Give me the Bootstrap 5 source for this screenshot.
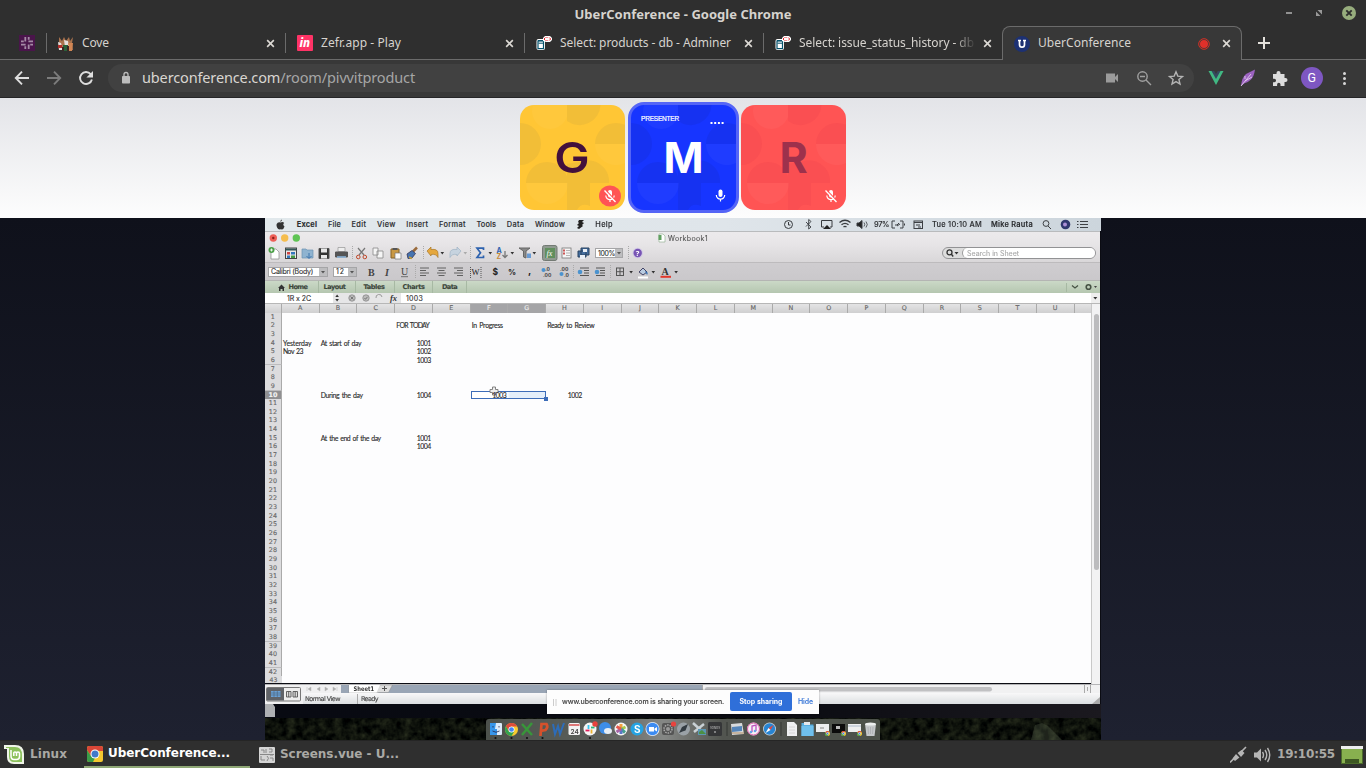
<!DOCTYPE html>
<html lang="en">
<head>
<meta charset="utf-8">
<title>UberConference</title>
<link href="https://cdn.jsdelivr.net/npm/bootstrap@5.3.0/dist/css/bootstrap.min.css" rel="stylesheet">
<style>
html,body{width:1366px;height:768px;overflow:hidden}
body{font-family:"Noto Sans",sans-serif;background:#2f2f2f;color:#d6d3ce;font-size:12px;line-height:1}
svg{display:block;flex:none}
.fit{display:inline-block;white-space:nowrap;flex:none}
/* window frame */
.win-title{height:26px;font-weight:700;font-size:13px;padding-top:8px}
.win-btns{right:0;top:0}
.tabstrip{height:34px;background:linear-gradient(#6b6b6b,#6b6b6b) bottom/100% 1px no-repeat}
.tabx{width:239px;padding:0 10px 0 11px;height:20px;border-left:1px solid #6b6b6b;margin-top:7px;overflow:hidden}
.tab-pin{width:46px;padding-left:19px;height:34px}
.tab-on{width:240px;height:34px;padding:0 10px 0 11px;background:#383838;border:1px solid #6b6b6b;border-bottom:0;border-radius:8px 8px 0 0}
.tab-name{margin-left:8px;font-size:12px;line-height:18px;margin-top:-1px}
.clip{width:175px;overflow:hidden;-webkit-mask:linear-gradient(90deg,#000 155px,transparent 177px)}
.navrow{height:38px;background:#383838;border-bottom:1px solid #252527;padding-bottom:2px}
.omni{width:1086px;height:28px;border-radius:14px;background:#414141}
.url{font-size:14.5px;margin-left:12px;line-height:20px;color:#a6a6a6;margin-top:-1px}
.url b{font-weight:400;color:#d9d6d1}
.lock{margin-left:14px}
/* conference */
.people{height:120px;padding-top:4px;background:linear-gradient(#e3e4e8,#fdfdfd)}
.tile{width:105px;height:105px;border-radius:14px;overflow:hidden;position:relative;margin-top:3px;font-family:Inter,sans-serif;font-weight:700;font-size:43px}
.tile-g{background:#ffc635;color:#43103c}
.tile-r{background:#ff5454;color:#9d314c}
.tile-m{width:111px;height:111px;margin:0 2px 0 3px;border:3px solid #5565f6;border-radius:16px;background:#1735ff;color:#fff}
.tile .glyph{position:absolute;inset:0;display:flex;align-items:center;justify-content:center}
.tile-g .glyph{transform:scaleX(1.1);padding-right:1px;font-weight:600}
.tile svg.over{position:absolute;left:0;top:0}
.tag{position:absolute;left:10px;top:10px;font:6.5px "Liberation Sans",sans-serif;line-height:8px;-webkit-text-stroke:.2px #fff}
.stage{height:522px;padding-left:265px;background:linear-gradient(#0f111b,#1e2130)}
.mac{width:836px;height:522px;position:relative;overflow:hidden;background:#0b0c13}
.soft{filter:blur(.42px);-webkit-text-stroke:.12px currentColor}
.mac-menu{height:13px;background:linear-gradient(90deg,#e2e9ec,#dfe5ea 55%,#ccd5dc);font:500 7.4px Inter,sans-serif;color:#2c2e31;gap:10.7px;padding-left:10px}
.xl{width:835px}
.xl-title{height:13px;background:linear-gradient(#eceaec,#e7e5e7);border-top:1px solid #b9bbbd;font:7px Inter,sans-serif;color:#555}
.xl-tb1{height:18px;background:linear-gradient(#e7e5e7,#d9d7d9)}
.xl-tb2{height:19px;background:linear-gradient(#cfcdd0,#cac8cb);border-top:1px solid #bdbbbd;border-bottom:1px solid #b4b5b3}
.xl-field{background:#fff;border:1px solid #a5a5a7;height:10px;font:7px Inter,sans-serif;color:#333;padding-left:2px;position:relative}
.xl-drop{width:8px;height:8px;background:#bdbdbf url('data:image/svg+xml,<svg xmlns="http://www.w3.org/2000/svg" width="8" height="8"><path d="M2 3h4L4 5.500z" fill="%23555"/></svg>');margin-left:auto}
.xl-ribbon{height:12px;background:linear-gradient(#cbd9c7,#b5c7b0);font:700 6.6px "DejaVu Sans",sans-serif;color:#3c463b}
.xl-ribbon>span{height:12px;border-right:1px solid #a7b9a3;display:flex;align-items:center;justify-content:center}
.xl-form{height:11px;background:#fff;font:7px Inter,sans-serif;color:#333;border-bottom:1px solid #b7b7b7}
.sheet{height:380px}
.cols,.line{display:grid;grid-template-columns:16.8px repeat(22,37.75px);width:826px;overflow:hidden}
.cols{height:8.6px;font:6.4px/9px "DejaVu Sans",sans-serif;color:#666;background:linear-gradient(#e4e4e5,#cfcfd0)}
.cols div{border-right:1px solid #aaa;text-align:center}
.cols .sel{background:#a5a5a7;color:#eee}
.line{height:8.67px;font:6.9px/8.6px Lato,sans-serif;color:#2b2b2b;background:#fdfdfe;word-spacing:1px}
.line:last-child{height:7.3px}
.line:last-child .rh{font-size:6.2px;line-height:7.3px;border:0}
.line div{white-space:nowrap;overflow:visible;padding:0 2px 0 1.2px}
.line .rh{background:#dcdcde;border-bottom:1px solid #bcbcbe;border-right:1px solid #aaa;text-align:center;font:6.4px/8.6px "DejaVu Sans",sans-serif;color:#666;padding:0}
.line .rh.sel{background:#909092;color:#f4f4f4;font-weight:700}
.pick{border:1.5px solid #3c6cb8;background:linear-gradient(90deg,#fff 48%,#e3eefa 52%);height:8.67px}
.cursor{position:absolute;left:224px;top:168px}
.handle{position:absolute;left:279px;top:179px;width:4px;height:4px;background:#3c6cb8}
.search{width:154px;height:12px;border:1px solid #929294;border-radius:6px;background:#ddd;margin-right:4px;font:7px Inter,sans-serif;color:#aaa}
.search div{background:#fff;border-radius:6px;height:10px;width:133px;padding-left:4px;border-left:1px solid #999}
.vbar{width:9px;background:#f2f2f3;border-left:1px solid #c8c8c8}
.vthumb{width:5px;height:256px;border-radius:3px;background:#bcbcbe;margin:10px auto 0}
.foot{height:20px;background:#eaebed;border-top:1px solid #b5b5b7}
.foot-tabs{height:8px;background:#99a5b5}
.foot-stat{height:11px;padding-top:1px;background:linear-gradient(#f8f8f9,#dcdfe1);font:6.5px "DejaVu Sans",sans-serif;color:#444}
.strip{height:14px;background:linear-gradient(90deg,#080a12,#0a0b11 60%,#1b191f)}
.share{position:absolute;left:282px;top:472px;width:272px;height:24px;padding-bottom:1px;background:#fdfdfd;font:500 7px Inter,sans-serif;color:#444;box-shadow:0 0 2px #0005}
.stopb{width:62px;height:19px;border-radius:2px;background:#2f6fd9;color:#fff;margin:0 6px}
.hide-link{color:#3a78d8}
.dock{position:absolute;left:221px;top:501px}
.taskbar{height:28px;background:#2f2f2f;border-top:1px solid #252525;font:700 12px "DejaVu Sans",sans-serif;color:#aaa9a5}
.taskbar .fit{margin-top:-1px}
.task{height:27px;width:166px;border-bottom:2px solid #8fa876;color:#fff;padding-left:3px;margin-left:17px}
.g3{margin-left:3px}.g5{margin-left:5px}.g9{margin-left:9px}
</style>
</head>
<body>
<svg width="0" height="0" class="position-absolute"><defs>
<symbol id="x" viewBox="0 0 10 10"><path d="M1.3 1.3l7.4 7.4M8.7 1.3L1.3 8.7" stroke="#dcd9d4" stroke-width="1.8"/></symbol>
<symbol id="adm" viewBox="0 0 16 16"><rect x=".5" y="4" width="8.5" height="11" rx="2" fill="#fff"/><rect x="2" y="6" width="5.500" height="7.600" fill="#fff" stroke="#06526c" stroke-width="1.200"/><path d="M2 5.500h5.500M2.500 8.200h4.500" stroke="#06526c"/><path d="M9 1h5l2 2v2l-2 2h-4l-3-1V3z" fill="#fff"/><path d="M9.500 2.500L8 4l1.500 1.500M13.200 2.500L14.700 4l-1.500 1.500M11 2v1M11 5v1" stroke="#e3262d" fill="none"/></symbol>
<symbol id="pat" viewBox="0 0 105 105"><g fill="currentColor"><path d="M47 0h33.500a21 21 0 0 1-33.500 16zM0 18a21 21 0 0 1 0 42zM75 39a21 21 0 0 1 42 0zM6 78a21 21 0 0 1 42 0zM47 78V59q8-2 13-2a21 21 0 0 1 29 21zM47 78v27h10q4-8 13-4V78z" opacity=".75"/></g><g fill="#fff"><path d="M13 0a17 17 0 0 0 34 12V0zM6 78a21 21 0 0 0 42 0zM75 39a21 21 0 0 0 30 19V39z" opacity=".035"/></g></symbol>
<symbol id="mic" viewBox="0 0 14 14"><rect x="5" y="1" width="4" height="7.500" rx="2" fill="#fff"/><path d="M2.800 6.500a4.200 4.200 0 0 0 8.400 0M7 10.500V13" stroke="#fff" stroke-width="1.200" fill="none"/></symbol>
<symbol id="mute" viewBox="0 0 14 14"><use href="#mic"/><path d="M2.500 1L13 12" stroke="#ff5454" stroke-width="1.200"/><path d="M1.500 1.500L12.500 13" stroke="#fff" stroke-width="1.300"/></symbol>
<symbol id="chr" viewBox="0 0 16 16"><circle cx="8" cy="8" r="8" fill="#f7ca2e"/><path d="M1.100 4A8 8 0 0 1 15 4.200H8L4.500 10z" fill="#dd4b3c"/><path d="M1.100 4A8 8 0 0 0 8 16l3.500-6L8 11.500 4.500 10z" fill="#32a350"/><circle cx="8" cy="8" r="3.700" fill="#fff"/><circle cx="8" cy="8" r="2.900" fill="#4285f4"/></symbol>
</defs></svg>

<header>
 <div class="win-title text-center position-relative"><span class="fit" data-w="217">UberConference - Google Chrome</span>
  <svg class="win-btns position-absolute" width="100" height="26" viewBox="1266 0 100 26"><path d="M1286 13h6" stroke="#aaa" stroke-width="1.600"/><path d="M1317.500 10h4.500v4.500zM1316 11.500v4.500h4.500z" fill="#999"/><circle cx="1349" cy="13" r="7" fill="#97ad7d"/><path d="M1346.300 10.300l5.400 5.400m0-5.400l-5.400 5.400" stroke="#2d2d2d" stroke-width="1.900"/></svg>
 </div>
 <nav class="tabstrip d-flex">
  <div class="tab-pin d-flex align-items-center"><svg width="16" height="16" viewBox="0 0 16 16"><rect width="16" height="16" fill="#4a154b"/><path d="M6.300 2v4.600M9.700 9.400V14M2 9.700h4.600M9.400 6.300H14M9.700 2v2.800M6.300 11.200V14M2 6.300h2.800M11.200 9.700H14" stroke="#a58ba6" stroke-width="1.800"/></svg></div>
  <div class="tabx d-flex align-items-center"><svg width="16" height="16" viewBox="0 0 16 16"><path d="M1 2l3 4 2-4 2 4 3-4 1 4 3-4-1 6 1 7H1V9z" fill="#a8724d"/><path d="M0 7l3 1 2 7H1zM6 5l4 1 1 5-4 1z" fill="#e3dfdc"/><path d="M5 10h5v6H5z" fill="#28613b"/><path d="M10 8h5l-1 8h-3z" fill="#d18654"/><path d="M0 10h4v3H0z" fill="#b12e2b"/><path d="M4 12h2v4H4zM9 11h2v5H9z" fill="#3a2724"/></svg><span class="fit tab-name" data-w="27">Cove</span><svg class="ms-auto" width="9" height="9"><use href="#x"/></svg></div>
  <div class="tabx d-flex align-items-center"><svg width="16" height="16"><rect width="16" height="16" rx="1" fill="#ff3366"/><text x="2.500" y="12" font-family="Noto Sans" font-style="italic" font-weight="800" font-size="11.500" fill="#fff">in</text></svg><span class="fit tab-name" data-w="80">Zefr.app - Play</span><svg class="ms-auto" width="9" height="9"><use href="#x"/></svg></div>
  <div class="tabx d-flex align-items-center"><svg width="16" height="16"><use href="#adm"/></svg><span class="fit tab-name" data-w="171">Select: products - db - Adminer</span><svg class="ms-auto" width="9" height="9"><use href="#x"/></svg></div>
  <div class="tabx d-flex align-items-center"><svg width="16" height="16"><use href="#adm"/></svg><div class="tab-name clip"><span class="fit" data-w="175">Select: issue_status_history - db</span></div><svg class="ms-auto" width="9" height="9"><use href="#x"/></svg></div>
  <div class="tab-on d-flex align-items-center"><svg width="16" height="16"><circle cx="8" cy="8" r="8" fill="#1d3173"/><path d="M4 4.500h3M9 4.500h3M5.500 4.500v4q0 2.700 2.500 2.700t2.500-2.700v-4" fill="none" stroke="#fff" stroke-width="1.700"/></svg><span class="fit tab-name" data-w="93">UberConference</span><svg class="ms-auto me-2" width="12" height="12" viewBox="0 0 12 12"><circle cx="6" cy="6" r="5.300" fill="none" stroke="#d93025" stroke-width="1"/><circle cx="6" cy="6" r="4" fill="#e0302a"/></svg><svg class="ms-1" width="9" height="9"><use href="#x"/></svg></div>
  <svg class="ms-3 mt-2" width="14" height="18" viewBox="1257 34 14 18"><path d="M1257 43h12M1263 37v12" stroke="#e4e1dc" stroke-width="2"/></svg>
 </nav>
 <div class="navrow d-flex align-items-center">
  <svg width="108" height="30" viewBox="0 63 108 30" fill="none" stroke-width="1.900"><path d="M29 78H16.500M22 71.700L15.800 78l6.200 6.300" stroke="#dedede"/><path d="M47 78h12.500M54 71.700l6.200 6.300-6.200 6.300" stroke="#7c7c7c"/><path d="M90.700 74.200a6 6 0 1 0 1.200 5.300" stroke="#dedede"/><path d="M93 71v6.600h-6.600z" fill="#dedede"/></svg>
  <div class="omni d-flex align-items-center">
   <svg class="lock" width="8" height="14" viewBox="122 71 8 12"><path d="M124 75v-1.500a2 2 0 0 1 4 0V75" fill="none" stroke="#bdbdbd" stroke-width="1.300"/><rect x="122" y="75" width="8" height="7.500" rx=".8" fill="#bdbdbd"/></svg>
   <span class="fit url" data-w="273"><b>uberconference.com</b>/room/pivvitproduct</span>
   <svg class="ms-auto" width="94" height="20" viewBox="1100 68 94 20"><rect x="1106" y="73.500" width="9" height="9" fill="#9b9b9b"/><path d="M1115 77l3-3v8l-3-3z" fill="#9b9b9b"/><g fill="none" stroke="#a0a0a0" stroke-width="1.400"><circle cx="1142.500" cy="76.500" r="4.700"/><path d="M1146 80l5 5M1140 76.500h5"/><path d="M1176 71.800l1.800 4.300 4.700.4-3.600 3 1.100 4.600-4-2.500-4 2.500 1.100-4.600-3.600-3 4.700-.4z" stroke="#b5b5b5"/></g></svg>
  </div>
  <svg width="172" height="30" viewBox="1194 63 172 30"><path d="M1208.500 71h5l2.500 4.500 2.500-4.500h5L1216 85z" fill="#41b883"/><path d="M1211.500 71h2.700l1.800 3 1.800-3h2.700l-4.500 8z" fill="#35495e"/><path d="M1241 86q1-9 5-12 4-2 9-4.500-1 7-4 10-3 3-7 4z" fill="#9b62c0"/><path d="M1241 86l10-12M1245 81l7-4M1245 79v-3" stroke="#e3cdee" stroke-width=".9"/><path d="M1273 74h3.500v-1a2 2 0 0 1 4 0v1h4v4h1a2 2 0 0 1 0 4h-1v4h-4v-1.500a1.700 1.700 0 0 0-3.400 0V86H1273v-3.800h1.300a1.700 1.700 0 0 0 0-3.500H1273z" fill="#dcdcdc"/><circle cx="1312" cy="78" r="11" fill="#7e57c2"/><text x="1307.600" y="82.400" font-family="Roboto" font-size="12.500" fill="#fff">G</text><g fill="#d8d8d8"><circle cx="1344.500" cy="73.500" r="1.500"/><circle cx="1344.500" cy="78.500" r="1.500"/><circle cx="1344.500" cy="83.500" r="1.500"/></g></svg>
 </div>
</header>

<section class="people d-flex justify-content-center">
 <div class="tile tile-g"><svg class="over" width="105" height="105" color="#eebb38"><use href="#pat"/></svg><div class="glyph">G</div><svg class="over" width="105" height="105"><ellipse cx="90" cy="91" rx="11" ry="10.500" fill="#ff5454"/><use href="#mute" x="83" y="84" width="14" height="14"/></svg></div>
 <div class="tile tile-m"><svg class="over" width="105" height="105" color="#1731ec"><use href="#pat"/></svg><div class="glyph">M</div><span class="tag fit" data-w="38">PRESENTER</span><svg class="over" width="105" height="105"><path d="M79.500 18h14" stroke="#fff" stroke-width="2" stroke-dasharray="2 1.700"/><use href="#mic" x="82.500" y="83.500" width="14" height="14"/></svg></div>
 <div class="tile tile-r"><svg class="over" width="105" height="105" color="#f84d52"><use href="#pat"/></svg><div class="glyph">R</div><svg class="over" width="105" height="105"><use href="#mute" x="83" y="84" width="14" height="14"/></svg></div>
</section>

<main class="stage">
<div class="mac"><div class="soft">
 <div class="mac-menu d-flex align-items-center">
  <svg width="11" height="11" viewBox="0 0 11 11"><path d="M7 .5Q7 2.500 5.300 2.900 5.300 1 7 .5zM5.500 3.500q2.500-1 3.700.5-2 1.500.3 3.500-1 3-2.500 3-1.200-.6-2.300 0C2.500 10.500 1 7 1.700 5q1-2.300 3.800-1.500z" fill="#333"/></svg>
  <b class="fit" data-w="20.500">Excel</b><span class="fit" data-w="13">File</span><span class="fit" data-w="14.700">Edit</span><span class="fit" data-w="18.700">View</span><span class="fit" data-w="22">Insert</span><span class="fit" data-w="26.700">Format</span><span class="fit" data-w="19.700">Tools</span><span class="fit" data-w="17.500">Data</span><span class="fit" data-w="30">Window</span>
  <svg width="9" height="9" viewBox="0 0 9 9"><path d="M3 0h5L6 2l2 1-2 2 1 1-4 3-2-1 2-2-2-1 2-2-1-1z" fill="#222"/></svg><span class="fit" data-w="17.500">Help</span>
  <div class="d-flex align-items-center ms-auto">
   <svg width="92" height="13" viewBox="782 218 92 13" fill="none" stroke="#383b3f"><circle cx="788.500" cy="224.500" r="4"/><path d="M788.500 222v3h2"/><path d="M806 222l5 5-2.300 2v-9.500l2.300 2-5 5" stroke-width=".9"/><path d="M824 227h-2.500v-6.500h10.500v6.500H830"/><path d="M823 229l4-4 4 4z" fill="#222" stroke="none"/><path d="M839.500 222.500q5.500-4.500 11 0M841.500 224.800q3.500-3 7 0M843.500 227q1.500-1.300 3 0" stroke-width="1.300"/><path d="M857 223h2l3-2.500v8l-3-2.500h-2z" fill="#222"/><path d="M864 222.500q1.500 2 0 4M866 221.500q2.500 3 0 6" stroke-width=".8"/></svg>
   <span class="fit" data-w="15">97%</span>
   <svg width="43" height="13" viewBox="889 218 43 13" fill="none" stroke="#3d4044"><path d="M895 221h-3v7h3M900 221h3v7h-3M904.500 223.500v2M895 225h2l2-2M897 226l3-2"/><rect x="914" y="221" width="8.500" height="7.500"/><path d="M914 222.500h8.500M916 225h4M918 227h3"/></svg>
   <span class="fit" data-w="50">Tue 10:10 AM</span><span class="fit fw-semibold g9" data-w="42">Mike Rauta</span>
   <svg width="68" height="13" viewBox="1033 218 68 13" fill="none" stroke="#3d4044"><circle cx="1046" cy="223.500" r="2.900"/><path d="M1048 226l3 3"/><circle cx="1065.500" cy="224.500" r="4.800" fill="#30386e" stroke="none"/><circle cx="1065" cy="224.500" r="2" fill="#ac8fd6" stroke="none"/><path d="M1080 221.500h8M1080 224.500h8M1080 227.500h8M1077 221.500h1.500M1077 224.500h1.500M1077 227.500h1.500" stroke-width="1.200"/></svg>
  </div>
 </div>
 <div class="xl">
  <div class="xl-title d-flex align-items-center"><svg width="403" height="12" viewBox="265 232 403 12"><circle cx="273.300" cy="238" r="3.700" fill="#ed5f57"/><circle cx="273.300" cy="238" r="1.200" fill="#8c1d17"/><circle cx="284.700" cy="238" r="3.700" fill="#f5bd4e"/><circle cx="296.300" cy="238" r="3.700" fill="#5fc454"/><path d="M659 234h4l2 2v6h-6z" fill="#fff" stroke="#8a8" stroke-width=".6"/><path d="M658.500 235h3v5h-3z" fill="#60a060"/></svg><span class="fit" data-w="40">Workbook1</span></div>
  <div class="xl-tb1 d-flex align-items-center">
   <svg width="330" height="18" viewBox="265 244 330 18" fill="none" stroke="#555">
    <path d="M271 249h5l3 3v7h-8z" fill="#fff" stroke="#888" stroke-width=".7"/><circle cx="271.500" cy="250" r="3" fill="#4ba047" stroke="none"/><path d="M270 250h3M271.500 248.500v3" stroke="#fff" stroke-width=".8"/>
    <rect x="285.500" y="248" width="11" height="10.500" fill="#e8e8e8" stroke="#444"/><path d="M285.500 249.500h11" stroke="#355" stroke-width="2"/><path d="M287 252h3v2.500h-3z" fill="#c44" stroke="none"/><path d="M291 252h4v2.500h-4zM287 255.500h3v2.500h-3z" fill="#37b" stroke="none"/><path d="M291 255.500h4v2.500h-4z" fill="#494" stroke="none"/>
    <path d="M302 249h4l1 1h6v8h-11z" fill="#8fb3d0" stroke="#6b93b3" stroke-width=".7"/><path d="M309 253v5m-2.500-2l2.500 2.500 2.500-2.500" stroke="#3d74ad"/>
    <path d="M319 248.500h10v10h-10z" fill="#333"/><path d="M321 248.500h6v4h-6zM321 255h6v3.500h-6z" fill="#e8e8e8" stroke="none"/>
    <path d="M338 247.500h7v4h-7z" fill="#eee" stroke="#888" stroke-width=".6"/><path d="M335.500 252h12v5h-12z" fill="#555"/><path d="M337 257h9" stroke="#8cb8e0" stroke-width="1.500"/>
    <path d="M352.500 246v14M423.500 246v14M470.500 246v14" stroke="#aaa" stroke-dasharray="1 1"/>
    <path d="M358 248l6 7M365 248l-6 7" stroke="#777" stroke-width="1.200"/><circle cx="358.300" cy="257" r="1.800" stroke="#c0492b"/><circle cx="364.800" cy="257" r="1.800" stroke="#c0492b"/>
    <path d="M373 248h5v7h-5zM377 251h6v7h-6z" fill="#f5f5f5" stroke="#888" stroke-width=".8"/>
    <path d="M391 249h8v9h-8z" fill="#c99945" stroke="#85632a"/><path d="M392.500 248h5v2h-5z" fill="#555" stroke="none"/><path d="M395 253h6v6h-6z" fill="#fafafa" stroke="#777" stroke-width=".7"/>
    <path d="M417 247.500l-4 4" stroke="#9a6a3b" stroke-width="2.500"/><path d="M407 254l5-3.500 3.500 3-3.500 4.500-4 .5z" fill="#4573b0" stroke="#335" stroke-width=".8"/><path d="M409 257l3 1.500" stroke="#c9a23c" stroke-width="1.500"/>
    <path d="M427 251l4-4v2.500q7-1 7 4v4q-2-4-7-3v1.500z" fill="#e5a73d" stroke="#a9782a" stroke-width=".7"/>
    <path d="M461 251l-4-4v2.500q-7-1-7 4v4q2-4 7-3v1.500z" fill="#c6d3df" stroke="#9fb3c4" stroke-width=".7"/>
    <g fill="#333" stroke="none"><path d="M440.500 252h3.600l-1.800 2.500zM488.500 252h3.600l-1.800 2.500zM510.500 252h3.600l-1.800 2.500zM532.500 252h3.600l-1.800 2.500z"/><path d="M463.500 252h3.600l-1.800 2.500z" fill="#aaa"/></g>
    <path d="M483.500 250v-1.800h-6.500l3.500 4.500-3.500 4.800h6.500V255.500" stroke="#2d62ae" stroke-width="1.700"/>
    <g stroke="none" font-family="Inter" font-size="7" font-weight="700"><text x="496.500" y="252.500" fill="#2d62ae">A</text><text x="496.500" y="259" fill="#c78b3b">Z</text></g><path d="M505 251v6m-2.500-2l2.500 2.500 2.500-2.500" stroke="#777" stroke-width="1.300"/>
    <path d="M519 248h11l-4 3v7l-2.500-1v-6z" fill="#888" stroke="#666"/><path d="M527 253.500h4v4.500h-4z" fill="#6a9cd5" stroke="none"/>
    <rect x="542.500" y="245.500" width="14.500" height="15" rx="2" fill="#8f9a90" stroke="#737a74"/><rect x="545" y="248" width="10" height="10" fill="#618f5e" stroke="none"/><text x="546.500" y="256" stroke="none" fill="#fff" font-family="Liberation Serif" font-style="italic" font-size="8">fx</text>
    <rect x="562" y="248" width="9" height="10" fill="#f6f6f6" stroke="#777" stroke-width=".8"/><path d="M566 250.500h4M566 253h4M566 255.500h4" stroke="#999" stroke-width=".7"/><path d="M563 249.500h2v2h-2zM563 252.500h2v2h-2z" fill="#c55" stroke="none"/>
    <path d="M578 251h8v6h-8zM581 248h8v7h-8z" fill="#446d9e" stroke="#294261"/><path d="M583 249h4v3h-4zM580 255h5v4h-5z" fill="#e9eef5" stroke="none"/>
   </svg>
   <div class="xl-field d-flex align-items-center" style="width:28px"><span class="fit" data-w="17">100%</span><div class="xl-drop"></div></div>
   <svg width="24" height="18" viewBox="623 244 24 18"><path d="M628.500 246v14" stroke="#aaa" stroke-dasharray="1 1"/><circle cx="637.700" cy="253" r="5.200" fill="#d0c8e4"/><circle cx="637.700" cy="253" r="4.200" fill="#7754b4"/><text x="635.700" y="255.900" font-size="7.500" font-weight="700" fill="#fff">?</text></svg>
   <div class="search d-flex justify-content-between ms-auto"><svg width="18" height="10" viewBox="0 0 18 10"><circle cx="6.500" cy="4.300" r="2.500" fill="none" stroke="#333" stroke-width="1.300"/><path d="M8.200 6l2 2.500" stroke="#333" stroke-width="1.400"/><path d="M11.500 4h4l-2 2.500z" fill="#333"/></svg><div><span class="fit" style="line-height:11px" data-w="52">Search in Sheet</span></div></div>
  </div>
  <div class="xl-tb2 d-flex align-items-center">
   <div class="xl-field d-flex align-items-center g3" style="width:60px"><span class="fit" data-w="42">Calibri (Body)</span><div class="xl-drop"></div></div>
   <div class="xl-field d-flex align-items-center g5" style="width:24px"><span class="fit" data-w="9">12</span><div class="xl-drop"></div></div>
   <svg width="330" height="18" viewBox="357 263 330 18" fill="none" stroke="#555">
    <g stroke="none" fill="#444" font-family="Liberation Serif" font-size="10"><text x="368" y="275.500" font-weight="700">B</text><text x="385" y="275.500" font-style="italic" font-weight="700">I</text><text x="401" y="275">U</text></g><path d="M401 276.700h7" stroke-width=".8"/>
    <path d="M415.500 265v14M573.500 265v14M610.500 265v14" stroke="#aaa" stroke-dasharray="1 1"/>
    <path d="M420 268h9M420 270.500h6M420 273h9M420 275.500h6M437 268h9M438.500 270.500h6M437 273h9M438.500 275.500h6M454 268h9M457 270.500h6M454 273h9M457 275.500h6" stroke-width=".9"/>
    <path d="M470.500 267v11M481 267v11" stroke-dasharray="1 1"/>
    <g stroke="none" fill="#222" font-family="Inter" font-weight="700"><text x="471.500" y="275" font-size="8.500" font-family="Liberation Serif" font-weight="400">W</text><text x="492.500" y="275" font-size="8.500">$</text><text x="508" y="275" font-size="8">%</text><text x="528" y="273.500" font-size="10">,</text><g font-size="5" fill="#444"><text x="545" y="271">.0</text><text x="543" y="276.500">.00</text><text x="560" y="271">.00</text><text x="564" y="276.500">.0</text></g></g>
    <g fill="#4b93cf" stroke="none"><circle cx="543.500" cy="270" r="2"/><circle cx="561.500" cy="274" r="2"/><circle cx="580" cy="272" r="2.300"/><circle cx="597" cy="272" r="2.300"/></g>
    <path d="M580 268h9M584 270.500h5M584 273h5M580 275.500h9M596 268h9M600 270.500h5M600 273h5M596 275.500h9"/>
    <rect x="616.500" y="268" width="7" height="7.500"/><path d="M620 268v7.500M616.500 271.700h7"/>
    <path d="M639 272l4-4 4 4-4 3z" fill="#b9cbe0" stroke="#446"/><path d="M645 271q4 1 2 4z" fill="#2c6cb5" stroke="none"/><path d="M638 277.500h10" stroke="#fff" stroke-width="2"/>
    <text x="661.500" y="275" font-family="Liberation Serif" font-size="10" font-weight="700" fill="#333" stroke="none">A</text><path d="M660.500 276.800h10.500" stroke="#e2382b" stroke-width="2"/>
    <path d="M629.300 271h3.600l-1.800 2.500zM651.500 271h3.600l-1.800 2.500zM674.300 271h3.600l-1.800 2.500z" fill="#333" stroke="none"/>
   </svg>
  </div>
  <div class="xl-ribbon d-flex">
   <span style="width:54px;padding-left:2px"><svg class="me-1" width="7" height="7" viewBox="0 0 7 7"><path d="M0 4l3.500-3.500L7 4H6v3H4.500V5h-2v2H1V4z" fill="#333"/></svg><i class="fit fst-normal" data-w="19">Home</i></span>
   <span style="width:37px;padding-right:5px"><i class="fit fst-normal" data-w="22">Layout</i></span><span style="width:39px;padding-right:2px"><i class="fit fst-normal" data-w="21">Tables</i></span><span style="width:38px"><i class="fit fst-normal" data-w="22">Charts</i></span><span style="width:34px"><i class="fit fst-normal" data-w="15">Data</i></span>
   <svg class="ms-auto" width="36" height="12" viewBox="1064 281 36 12" fill="none" stroke="#465244"><path d="M1066.500 283v9" stroke="#a7b9a3"/><path d="M1072 285.500l3 2.500 3-2.500" stroke-width="1.200"/><circle cx="1088.500" cy="287" r="2.300" stroke-width="1.600"/><path d="M1094 286h3l-1.500 2z" fill="#444" stroke="none"/></svg>
  </div>
  <div class="xl-form d-flex align-items-center">
   <div class="text-center" style="width:68px"><span class="fit" data-w="24">1R x 2C</span></div>
   <svg width="73" height="10" viewBox="333 293 73 10"><path d="M333 293h68v10h-68z" fill="#e6e6e7"/><path d="M335.300 297h3.600l-1.800-2.500zM335.300 299h3.600l-1.800 2.500z" fill="#333"/><g fill="#bbb" stroke="#888" stroke-width=".8"><circle cx="352" cy="298" r="3.200"/><circle cx="366" cy="298" r="3.200"/><path d="M376 298a3 3 0 0 1 6-1" fill="none"/></g><path d="M350.500 296.500l3 3m0-3l-3 3M364.500 298l1 1.300 2-2.500" stroke="#666" stroke-width=".8" fill="none"/><text x="390" y="300.500" font-family="Liberation Serif" font-style="italic" font-weight="700" font-size="8.500" fill="#333">fx</text></svg>
   <span class="fit" data-w="17">1003</span>
   <svg class="ms-auto" width="9" height="10"><rect width="9" height="10" fill="#eee"/><path d="M2.300 4h4l-2 2.500z" fill="#333"/></svg>
  </div>
  <div class="sheet d-flex"><div class="overflow-hidden" id="grid" style="width:826px"></div><div class="vbar"><div class="vthumb"></div></div></div>
  <div class="foot d-flex">
   <svg width="38" height="19" viewBox="265 685 38 19"><rect x="265" y="685" width="38" height="19" fill="#f0f0f1"/><rect x="266.500" y="687.500" width="34" height="13.500" rx="1" fill="#eee" stroke="#777"/><rect x="267" y="688" width="17" height="12.500" fill="#606368"/><path d="M271 691h9.500v6H271z" fill="#6ba2d7"/><path d="M271 693h9.500M271 695h9.500M274 691v6M277.300 691v6" stroke="#456" stroke-width=".5"/><path d="M286.500 691.500h4.500v5.500h-4.500zM293 691.500h4.500v5.500H293zM288.700 691.500v5.500M295.200 691.500v5.500" fill="#ddd" stroke="#555" stroke-width=".9"/></svg>
   <div class="flex-grow-1">
    <div class="foot-tabs d-flex"><svg width="90" height="8" viewBox="303 685 90 8"><path d="M303 685h38v8h-38z" fill="#f0f0f1"/><path d="M307 687v4M311 687l-3 2 3 2zM320 687l-3 2 3 2zM325 687l3 2-3 2zM333 687l3 2-3 2zM337 687v4" fill="#aaa" stroke="#bbb" stroke-width=".5"/><path d="M349 685h43.500l-4 7.500H379l-2 .5h-28z" fill="#ddd" stroke="#888" stroke-width=".5"/><path d="M349 685h31l-3.500 7.500H349z" fill="#fff"/><text x="353.500" y="691.200" font-family="DejaVu Sans" font-weight="700" font-size="6.400" fill="#333" textLength="20.500" lengthAdjust="spacingAndGlyphs">Sheet1</text><path d="M382 688.500h5M384.500 686v5" stroke="#555"/></svg>
     <svg class="ms-auto" width="398" height="8" viewBox="702 685 398 8"><path d="M702 685h398v8H702z" fill="#f1f1f2"/><rect x="705" y="687" width="287" height="4.500" rx="2.200" fill="#c1c1c3"/><path d="M702.500 685v8M1084.500 685v8M1087.500 687v4M1090.500 685v8" stroke="#aaa"/></svg></div>
    <div class="foot-stat d-flex align-items-center"><span class="fit" style="margin-left:2px" data-w="35">Normal View</span><svg width="21" height="10"><path d="M17.500 0v10" stroke="#aaa"/></svg><span class="fit" data-w="17">Ready</span><svg class="ms-auto" width="8" height="10"><path d="M0 10l8-7v7z" fill="#aaa"/></svg></div>
   </div>
  </div>
 </div>
 <div class="strip"><svg width="10" height="13"><path d="M0 0h8l2 3v10H0z" fill="#aeb0b3"/></svg></div>
 <svg width="836" height="22"><filter id="leaf" x="0" y="0" width="100%" height="100%" color-interpolation-filters="sRGB"><feTurbulence type="fractalNoise" baseFrequency=".13" numOctaves="3" seed="4"/><feColorMatrix values=".26 0 0 0 -.075  .28 0 0 0 -.07  .18 0 0 0 -.045  0 0 0 0 1"/></filter><rect width="836" height="22" fill="#10150f"/><rect width="836" height="22" filter="url(#leaf)"/><path d="M797 22l-14-14-6-3-7 2-4 15z" fill="#59654c" opacity=".35"/></svg>
 <i class="handle"></i>
 <svg class="cursor" width="10" height="10" viewBox="0 0 10 10"><path d="M3.500 1h3v2.500H9v3H6.500V9h-3V6.500H1v-3h2.500z" fill="#eee" stroke="#777" stroke-width=".9"/></svg>
 <svg class="dock" width="395" height="22" viewBox="486 719 395 22">
  <defs><linearGradient id="dk"><stop offset="0" stop-color="#4c514b"/><stop offset=".3" stop-color="#5c605c"/><stop offset=".45" stop-color="#858785"/><stop offset=".6" stop-color="#525550"/><stop offset="1" stop-color="#4c5149"/></linearGradient></defs>
  <path d="M486 741v-19q0-3 3-3h388q3 0 3 3v19z" fill="url(#dk)"/>
  <rect x="490" y="723" width="12" height="12" rx="1" fill="#dbeaf8"/><path d="M490 723h6l-1 6h2v6h-7z" fill="#3696ea"/><path d="M492.500 731q3.500 2.500 7 0M493 726v1.500M499 726v1.500" stroke="#224" fill="none" stroke-width=".8"/>
  <use href="#chr" x="505" y="723" width="13" height="13"/>
  <path d="M522 724l10 11M532 723l-10 12" stroke="#38963a" stroke-width="2.500"/>
  <path d="M540.500 736l1-12h5q2 3-1 6l-5 1" stroke="#d5512c" stroke-width="2.700" fill="none"/>
  <path d="M553 724l2 10 3-8 2 8 4-11" stroke="#2d6cb8" stroke-width="2" fill="none"/>
  <rect x="568.500" y="723" width="11.500" height="12" rx="1.500" fill="#f3f3f3"/><path d="M569 724h10.500v2H569z" fill="#d77"/><text x="570.500" y="733.500" font-family="Inter" font-size="6.500" font-weight="600" fill="#444">24</text>
  <circle cx="590" cy="729" r="6.500" fill="#f5f5f5"/><path d="M588.500 725v4" stroke="#36c5f0" stroke-width="1.800"/><path d="M591 727.500h3.500" stroke="#2eb67d" stroke-width="1.800"/><path d="M591.500 729.500v4" stroke="#ecb22e" stroke-width="1.800"/><path d="M585.500 730.500h4" stroke="#e01e5a" stroke-width="1.800"/><circle cx="595" cy="724" r="2.700" fill="#e9433e"/>
  <circle cx="605" cy="728" r="6" fill="#3d8ee9"/><ellipse cx="608" cy="731" rx="4" ry="3" fill="#e6eef5"/>
  <circle cx="621" cy="729" r="6.500" fill="#f5f5f5"/><g stroke-width="3"><path d="M621 729v-5" stroke="#f1a13c"/><path d="M621 729l4.500-2" stroke="#a9c94c"/><path d="M621 729l4 3.500" stroke="#45a18f"/><path d="M621 729v5" stroke="#5b78c7"/><path d="M621 729l-4.500 3" stroke="#a665a8"/><path d="M621 729l-4.500-2.500" stroke="#e3594d"/></g>
  <circle cx="637" cy="729" r="6.500" fill="#25a3e2"/><text x="634" y="733" font-family="Inter" font-weight="700" font-size="10" fill="#fff">S</text>
  <circle cx="652.500" cy="729" r="7" fill="#e8f0fa"/><circle cx="652.500" cy="729" r="6.200" fill="#3c8bf2"/><path d="M649 727h5v4.500h-5zM654.500 728.500l2.500-1.500v4.500l-2.500-1.500z" fill="#fff"/>
  <rect x="662" y="723" width="12" height="12" rx="2" fill="#555"/><circle cx="668" cy="729" r="4" fill="none" stroke="#aaa" stroke-width="1.500" stroke-dasharray="1.500 1"/><circle cx="668" cy="729" r="2" fill="#999"/><circle cx="673.500" cy="724" r="2.600" fill="#e9433e"/>
  <circle cx="683.500" cy="729" r="6.500" fill="#9aa1a7"/><path d="M679 733l3-6 6-3-2.500 6.500-3 1z" fill="#333b42"/>
  <path d="M693 723l12 11M704 724l-10 8" stroke="#c9d1d5" stroke-width="2.500"/><path d="M698 729h8v6h-8z" fill="#5c96b3"/><path d="M699 732l3-2 4 4h-7z" fill="#4c9044"/>
  <rect x="708" y="722" width="14" height="14" rx="1.500" fill="#353638"/><text x="710" y="729" font-family="Inter" font-size="2.800" fill="#ccc">SONOS</text><path d="M715 731v2" stroke="#ccc"/>
  <path d="M727 722v14M781 722v14" stroke="#353834"/>
  <path d="M731 724l11-1 2 11-12 1z" fill="#d8dadb"/><path d="M732 727l10-1v5l-10 1z" fill="#5585b9"/><path d="M732 733h12" stroke="#b38f64"/>
  <circle cx="753.500" cy="729" r="6.500" fill="#f7f0f5"/><circle cx="753.500" cy="729" r="6" fill="none" stroke="#d65aa5"/><path d="M752 732v-6l4-1v6" fill="none" stroke="#bd4fbd" stroke-width="1.300"/><circle cx="751" cy="732" r="1.300" fill="#66a7e8"/><circle cx="755" cy="731" r="1.300" fill="#66a7e8"/>
  <circle cx="769.500" cy="729" r="6.500" fill="#c3cdd6"/><circle cx="769.500" cy="729" r="5.700" fill="#2785d3"/><path d="M773.500 725l-3 5-2-2z" fill="#e3473e"/><path d="M765.500 733l3-5 2 2z" fill="#fff"/>
  <path d="M787 722h7l3 3v11h-10z" fill="#eef0f1"/><path d="M789 727h6M789 730h6M789 733h6" stroke="#ccc" stroke-width=".7"/>
  <path d="M801.500 723h5l1 1.500h6V736h-12z" fill="#58aee0"/><path d="M804 722h6v3h-6z" fill="#e4e8eb"/><path d="M801.500 726h12v10h-12z" fill="#6fc0ec"/>
  <path d="M816 724h13v8h-13zM848 724h13v8h-13z" fill="#edeeef"/><path d="M832 724h13v9h-13z" fill="#0b0b0b"/><path d="M836 726h4v3h-4zM820 727h4v2h-4z" fill="#bbb"/><path d="M848 726h13" stroke="#aab8c9"/>
  <use href="#chr" x="825" y="731" width="5" height="5"/><use href="#chr" x="841" y="731" width="5" height="5"/><use href="#chr" x="857" y="731" width="5" height="5"/>
  <path d="M865 724h11l-1.500 12h-8z" fill="#c5c8ca"/><ellipse cx="870.500" cy="724" rx="5.500" ry="1.600" fill="#edefef"/><path d="M868 727l.5 7M873 727l-.5 7M870.500 727v7" stroke="#a2a5a8" stroke-width=".6"/>
  <g fill="#111"><circle cx="495.500" cy="738" r="1.100"/><circle cx="511.500" cy="738" r="1.100"/><circle cx="527" cy="738" r="1.100"/><circle cx="542.500" cy="738" r="1.100"/><circle cx="590" cy="738" r="1.100"/></g>
 </svg>
 <div class="share d-flex align-items-center">
  <svg width="15" height="12"><path d="M6.500 3v7M9 3v7" stroke="#ccc"/></svg><span class="fit" data-w="162">www.uberconference.com is sharing your screen.</span>
  <div class="stopb d-flex align-items-center justify-content-center"><span class="fit fw-semibold" data-w="43">Stop sharing</span></div><span class="fit hide-link" data-w="15">Hide</span>
 </div>
</div></div>
</main>

<footer class="taskbar d-flex align-items-center">
 <svg class="g3" width="24" height="22" viewBox="0 0 24 22"><path d="M1 1h11q9 0 9 9v10H11q-7 0-7-7V5H1z" fill="#f0f5e8" /><path d="M3 3h9q7 0 7 8v7h-8q-5 0-5-6V4H3z" fill="#8cc15c"/><path d="M8 6v6q0 3.500 3 3.500h2.500q3 0 3-3V9.500q0-1.500-1.500-1.500t-1.500 1.500V12m0-2.500q0-1.500-1.500-1.500T10.800 9.500V12" fill="none" stroke="#fff" stroke-width="1.500"/></svg>
 <span class="fit g3" data-w="37">Linux</span>
 <div class="task d-flex align-items-center"><svg width="16" height="16"><rect width="16" height="16" rx="2" fill="#f3c72f"/><path d="M0 2q0-2 2-2h12q2 0 2 2v3H8l-4 5-4-6z" fill="#d94737"/><path d="M0 4l4 6 4 2-2 4H2q-2 0-2-2z" fill="#3a9c48"/><circle cx="8" cy="8" r="4.500" fill="#fff"/><circle cx="8" cy="8" r="3.500" fill="#4279c9"/></svg><span class="fit g5" data-w="122">UberConference...</span></div>
 <svg class="ms-2" width="17" height="16" viewBox="0 0 17 16"><rect x="1" width="16" height="16" rx="1" fill="#d5d5d5"/><path d="M3 3h3v3M8 2v4M11 2h3v3h-3M3 9v4h4M9 9q3 2 0 5M12 8h3M12 11h3v3M2 7.500h14" fill="none" stroke="#888"/></svg>
 <span class="fit g5" data-w="119">Screens.vue - U...</span>
 <div class="d-flex align-items-center ms-auto"><svg width="47" height="20" viewBox="1230 744 47 20"><path d="M1230 761.500l5-5M1241 751l5-5" stroke="#b5b5b5" stroke-width="1.600"/><path d="M1232.500 757.500l3.500-4.500 3.500 3.500-4.500 3.500zM1237.500 752l4-3 3 3-3.500 4z" fill="#b5b5b5"/><path d="M1254 751.500h3l4-4v13l-4-4h-3z" fill="#b5b5b5"/><path d="M1262.500 751q2 3 0 6M1265 749q3.500 5 0 10M1267.500 747q4.500 7 0 14" fill="none" stroke="#b5b5b5" stroke-width="1.400"/></svg>
 <span class="fit" data-w="58">19:10:55</span>
 <svg width="31" height="20" viewBox="1335 744 31 20"><rect x="1341.500" y="745.500" width="21" height="17" fill="#88b04f" stroke="#4c6b2b"/><path d="M1341 745h22v3h-22z" fill="#eee"/><path d="M1345 758h14v4h-14z" fill="#3d5722"/></svg></div>
</footer>

<script>
// spreadsheet contents: row -> [column index, text, right aligned, width]
const cells={2:[[3,'FOR TODAY',0,33],[5,'In Progress',0,31],[7,'Ready to Review',0,47]],
4:[[0,'Yesterday',0,28.5],[1,'At start of day',0,40.5],[3,'1001',1,14]],5:[[0,'Nov 23',0,20],[3,'1002',1,14]],6:[[3,'1003',1,14]],
10:[[1,'During the day',0,42],[3,'1004',1,14],[5,'1003',1,14],[7,'1002',1,14]],15:[[1,'At the end of the day',0,60],[3,'1001',1,14]],16:[[3,'1004',1,14]]};
let h='<div class="cols"><div></div>';
for(let c=0;c<22;c++)h+=`<div class="${c==5||c==6?'sel':''}">${c<21?String.fromCharCode(65+c):''}</div>`;
h+='</div>';
for(let r=1;r<=43;r++){
 h+=`<div class="line"><div class="rh ${r==10?'sel':''}">${r}</div>`;
 for(const [c,t,right,w] of cells[r]||[])h+=`<div class="${right?'text-end':''}" style="grid-column:${c+2};grid-row:1;${r==10&&c==5?'z-index:2':''}"><span class="fit" data-w="${w}">${t}</span></div>`;
 if(r==10)h+='<div class="pick" style="grid-column:7/9;grid-row:1"></div>';
 h+='</div>';
}
document.getElementById('grid').innerHTML=h;
// spread each label over its measured width
function fit(){document.querySelectorAll('.fit').forEach(e=>{e.style.letterSpacing='0';const n=e.textContent.length,w=e.getBoundingClientRect().width;e.style.letterSpacing=((e.dataset.w-w)/n)+'px'})}
fit();document.fonts.ready.then(fit);
</script>
<script src="https://cdn.jsdelivr.net/npm/bootstrap@5.3.0/dist/js/bootstrap.bundle.min.js"></script>
</body>
</html>
